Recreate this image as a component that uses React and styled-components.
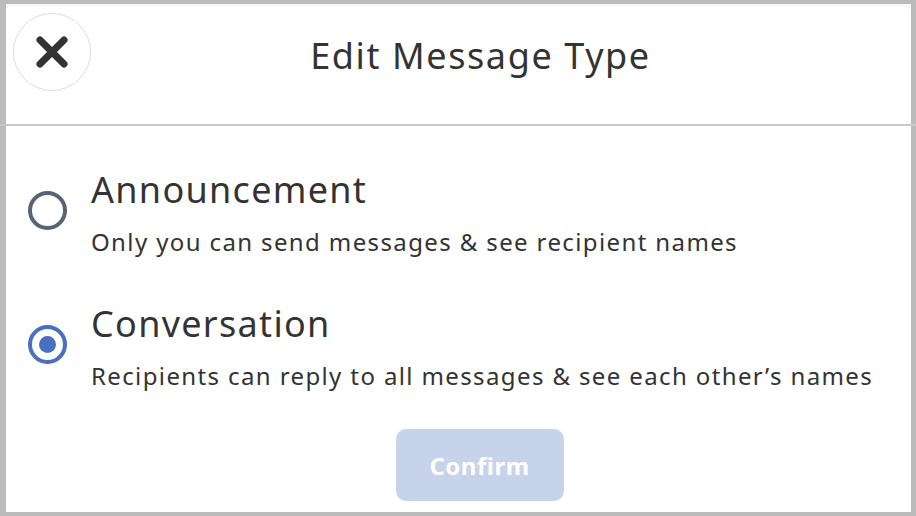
import React, { useState } from 'react'
import styled, { createGlobalStyle } from 'styled-components'

const GlobalStyle = createGlobalStyle`
    html, body {
        margin: 0;
        padding: 0;
        background: #ffffff;
    }
    body {
        font-family: "Noto Sans", "Open Sans", sans-serif;
        color: #333333;
    }
`

const Frame = styled('div')`
    box-sizing: border-box;
    width: 916px;
    height: 516px;
    border: 4px solid #bbbbbb;
    border-left-width: 6px;
    border-right-width: 5px;
    background: #ffffff;
    display: flex;
    flex-direction: column;
`

const Header = styled('header')`
    display: grid;
    grid-template-columns: 78px 1fr;
    align-items: center;
    height: 120px;
    padding: 0 41px 0 7px;
    box-shadow: inset 0 6px 6px -6px rgba(0, 0, 0, 0.08);
`

const CloseButton = styled('button')`
    width: 78px;
    height: 78px;
    margin-top: -24px;
    border-radius: 50%;
    border: 1.5px solid #d9dde3;
    background: #ffffff;
    display: flex;
    align-items: center;
    justify-content: center;
    padding: 0;
    cursor: pointer;
`

const Title = styled('h1')`
    margin: -17px 0 0 0;
    text-align: center;
    font-size: 36px;
    font-weight: 400;
    letter-spacing: 1.6px;
    line-height: 44px;
    color: #333333;
`

const Divider = styled('div')`
    height: 2px;
    background: #c9c9c9;
    margin: 0 -5px 0 -6px;
`

const Body = styled('div')`
    display: flex;
    flex-direction: column;
    padding: 41px 0 0 22px;
`

const Option = styled('label')`
    display: grid;
    grid-template-columns: 40px 1fr;
    column-gap: 23px;
    align-items: start;
    margin-bottom: ${({ $gap }) => $gap}px;
    cursor: pointer;
`

const Radio = styled('span')`
    box-sizing: border-box;
    width: 39px;
    height: 39px;
    margin-top: 24px;
    border-radius: 50%;
    border: 4px solid ${({ $checked }) => ($checked ? '#4a6fc1' : '#5c6274')};
    display: flex;
    align-items: center;
    justify-content: center;

    &::after {
        content: '';
        display: ${({ $checked }) => ($checked ? 'block' : 'none')};
        width: 17px;
        height: 17px;
        border-radius: 50%;
        background: #4a6fc1;
    }
`

const OptionText = styled('div')`
    display: flex;
    flex-direction: column;
`

const OptionTitle = styled('span')`
    font-size: 36px;
    line-height: 46px;
    letter-spacing: 1.3px;
    color: #333333;
`

const OptionDesc = styled('span')`
    font-size: 24px;
    line-height: 32px;
    letter-spacing: 1.38px;
    color: #333333;
    margin-top: 13px;
`

const Footer = styled('div')`
    display: flex;
    justify-content: center;
    padding-left: 20px;
`

const ConfirmButton = styled('button')`
    width: 168px;
    height: 72px;
    border: none;
    border-radius: 10px;
    background: #c7d3ea;
    color: #ffffff;
    font-family: inherit;
    font-size: 24px;
    font-weight: 700;
    letter-spacing: 0.5px;
    cursor: default;
`

const XIcon = () => (
    <svg width="32" height="32" viewBox="0 0 32 32" fill="none">
        <path
            d="M4 4 L28 28 M28 4 L4 28"
            stroke="#333333"
            strokeWidth="7"
            strokeLinecap="round"
        />
    </svg>
)

const options = [
    {
        id: 'announcement',
        title: 'Announcement',
        desc: 'Only you can send messages & see recipient names',
        gap: 43,
    },
    {
        id: 'conversation',
        title: 'Conversation',
        desc: 'Recipients can reply to all messages & see each other\u2019s names',
        gap: 37,
    },
]

export default function App() {
    const [selected, setSelected] = useState('conversation')

    return (
        <>
            <GlobalStyle />
            <Frame>
                <Header>
                    <CloseButton aria-label="Close">
                        <XIcon />
                    </CloseButton>
                    <Title>Edit Message Type</Title>
                </Header>
                <Divider />
                <Body>
                    {options.map((opt) => (
                        <Option
                            key={opt.id}
                            $gap={opt.gap}
                            onClick={() => setSelected(opt.id)}
                        >
                            <Radio $checked={selected === opt.id} />
                            <OptionText>
                                <OptionTitle>{opt.title}</OptionTitle>
                                <OptionDesc>{opt.desc}</OptionDesc>
                            </OptionText>
                        </Option>
                    ))}
                    <Footer>
                        <ConfirmButton disabled>Confirm</ConfirmButton>
                    </Footer>
                </Body>
            </Frame>
        </>
    )
}
